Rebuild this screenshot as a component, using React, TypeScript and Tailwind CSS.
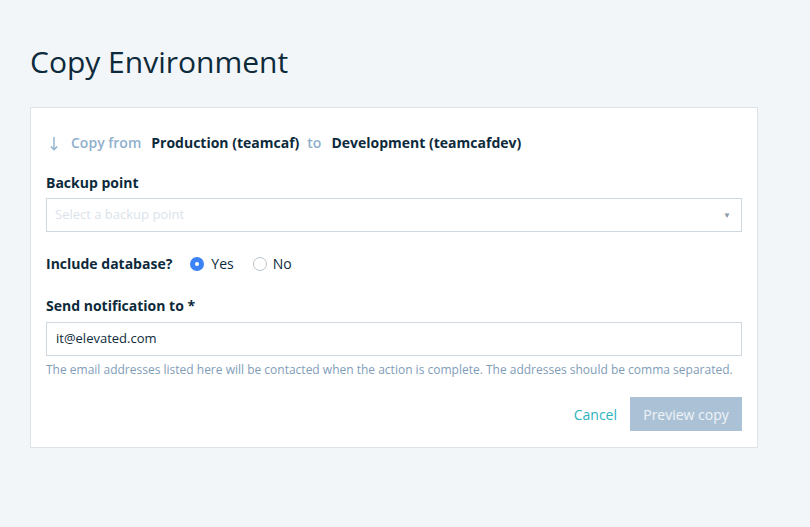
import React from "react";

export default function App() {
  return (
    <div className="min-h-[527px] w-[810px] bg-[#f3f6f9] pt-[40px] pl-[30px] pr-[52px]" style={{ fontFamily: '"Open Sans", sans-serif' }}>
      <h1 className="text-[30px] leading-[44px] text-[#0d2a3b] font-normal m-0">Copy Environment</h1>
      <div className="mt-[23px] bg-white border border-[#dde3e8] px-[15px] pt-[24px] pb-[16px]">
        <div className="flex items-center text-[14px] font-semibold leading-[22px]">
          <svg width="10" height="15" viewBox="0 0 10 15" className="ml-[3px] mr-[12px]" fill="none" stroke="#8fb0cc" strokeWidth="1.4">
            <path d="M5 1 V13.5" />
            <path d="M1.8 10.5 L5 13.8 L8.2 10.5" />
          </svg>
          <span className="text-[#8fb0cc]">Copy from</span>
          <span className="text-[#0d2a3b] font-bold ml-[10px]">Production (teamcaf)</span>
          <span className="text-[#8fb0cc] ml-[8px]">to</span>
          <span className="text-[#0d2a3b] font-bold ml-[10px]">Development (teamcafdev)</span>
        </div>
        <div className="mt-[19px] text-[14px] font-bold text-[#0d2a3b] leading-[20px]">Backup point</div>
        <div className="mt-[5px] h-[34px] border border-[#cfd8e0] flex items-center justify-between px-[8px]">
          <span className="text-[13px] text-[#dbe3ea]">Select a backup point</span>
          <span className="text-[8px] text-[#8a9aa8] mr-[2px]">▼</span>
        </div>
        <div className="mt-[22px] flex items-center text-[14px] leading-[20px]">
          <span className="font-bold text-[#0d2a3b]">Include database?</span>
          <span className="ml-[18px] w-[14px] h-[14px] rounded-full bg-[#3b82f6] flex items-center justify-center">
            <span className="w-[4px] h-[4px] rounded-full bg-white" />
          </span>
          <span className="ml-[7px] text-[#0d2a3b]">Yes</span>
          <span className="ml-[19px] w-[14px] h-[14px] rounded-full border border-[#b9c2ca] bg-white" />
          <span className="ml-[6px] text-[#0d2a3b]">No</span>
        </div>
        <div className="mt-[22px] text-[14px] font-bold text-[#0d2a3b] leading-[20px]">Send notification to *</div>
        <div className="mt-[6px] h-[34px] border border-[#cfd8e0] flex items-center px-[9px]">
          <span className="text-[13px] text-[#0d2a3b]">it@elevated.com</span>
        </div>
        <div className="mt-[6px] text-[12px] text-[#7f9db8] leading-[16px] whitespace-nowrap">
          The email addresses listed here will be contacted when the action is complete. The addresses should be comma separated.
        </div>
        <div className="mt-[19px] flex justify-end items-center">
          <span className="text-[14px] text-[#2db3c0] mr-[13px]">Cancel</span>
          <span className="h-[34px] w-[112px] bg-[#abc2d6] text-white/80 text-[14px] flex items-center justify-center">Preview copy</span>
        </div>
      </div>
    </div>
  );
}
